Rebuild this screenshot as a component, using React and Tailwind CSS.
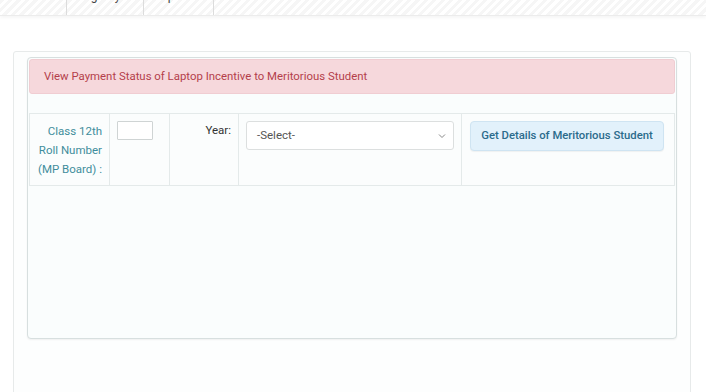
import React from "react";

export default function App() {
  return (
    <div className="w-[706px] h-[392px] overflow-hidden bg-white font-['Roboto',sans-serif]">
      {/* top bar */}
      <div className="h-[16px] overflow-hidden border-b border-[#ececec] shadow-[0_2px_3px_rgba(0,0,0,0.04)] bg-[repeating-linear-gradient(135deg,#f6f6f6_0px,#f6f6f6_3px,#ffffff_3px,#ffffff_6px)] flex pl-[66px]">
        <div className="w-[77px] border-l border-[#dcdcdc] pl-[10px] text-[12px] text-[#444] leading-[14px] -mt-[11px]">Registry</div>
        <div className="w-[71px] border-l border-r border-[#dcdcdc] pl-[10px] text-[12px] text-[#444] leading-[14px] -mt-[11px]">Reports</div>
      </div>

      {/* outer card */}
      <div className="mt-[35px] ml-[13px] w-[678px] h-[400px] border border-[#e7eaea] rounded-[3px] bg-[#fdfefe] pt-[5px] pl-[13px]">
        {/* inner panel */}
        <div className="w-[650px] h-[282px] border border-[#d7dfdf] rounded-[4px] bg-[#fafdfd] px-[1px] pt-[1px] shadow-[0_1px_2px_rgba(0,0,0,0.06)]">
          <div className="h-[35px] rounded-[3px] bg-[#f6d8dc] border border-[#f0cdd2] flex items-center pl-[14px] text-[11.4px] text-[#b43f4b]">
            View Payment Status of Laptop Incentive to Meritorious Student
          </div>

          <div className="mt-[19px] flex h-[73px] border border-[#e4eaea] bg-[#fbfdfd]">
            <div className="w-[80px] border-r border-[#e4eaea] pr-[7px] pt-[8px] text-right text-[11.5px] leading-[19px] text-[#3f8d9c]">
              Class 12th<br />Roll Number<br />(MP Board) :
            </div>
            <div className="w-[60px] border-r border-[#e4eaea] pl-[7px] pt-[7px]">
              <div className="w-[36px] h-[19px] border border-[#cfd4d4] bg-white rounded-[1px]"></div>
            </div>
            <div className="w-[69px] border-r border-[#e4eaea] pr-[7px] pt-[8px] text-right text-[11.5px] leading-[16px] text-[#333]">
              Year:
            </div>
            <div className="w-[223px] border-r border-[#e4eaea] pl-[7px] pt-[7px]">
              <div className="w-[208px] h-[29px] border border-[#dcdfdf] rounded-[3px] bg-white flex items-center justify-between pl-[10px] pr-[6px] text-[11.5px] text-[#555]">
                <span>-Select-</span>
                <svg width="10" height="10" viewBox="0 0 10 10" fill="none" stroke="#888" strokeWidth="1">
                  <path d="M2 3.5 L5 6.5 L8 3.5" />
                </svg>
              </div>
            </div>
            <div className="flex-1 pl-[8px] pt-[7px]">
              <div className="w-[194px] h-[30px] rounded-[4px] bg-[#e2f1fb] border border-[#cfe4f2] flex items-center justify-center text-[11.3px] font-medium text-[#2b6b8c] shadow-[0_1px_1px_rgba(0,0,0,0.05)]">
                Get Details of Meritorious Student
              </div>
            </div>
          </div>
        </div>
      </div>
    </div>
  );
}
